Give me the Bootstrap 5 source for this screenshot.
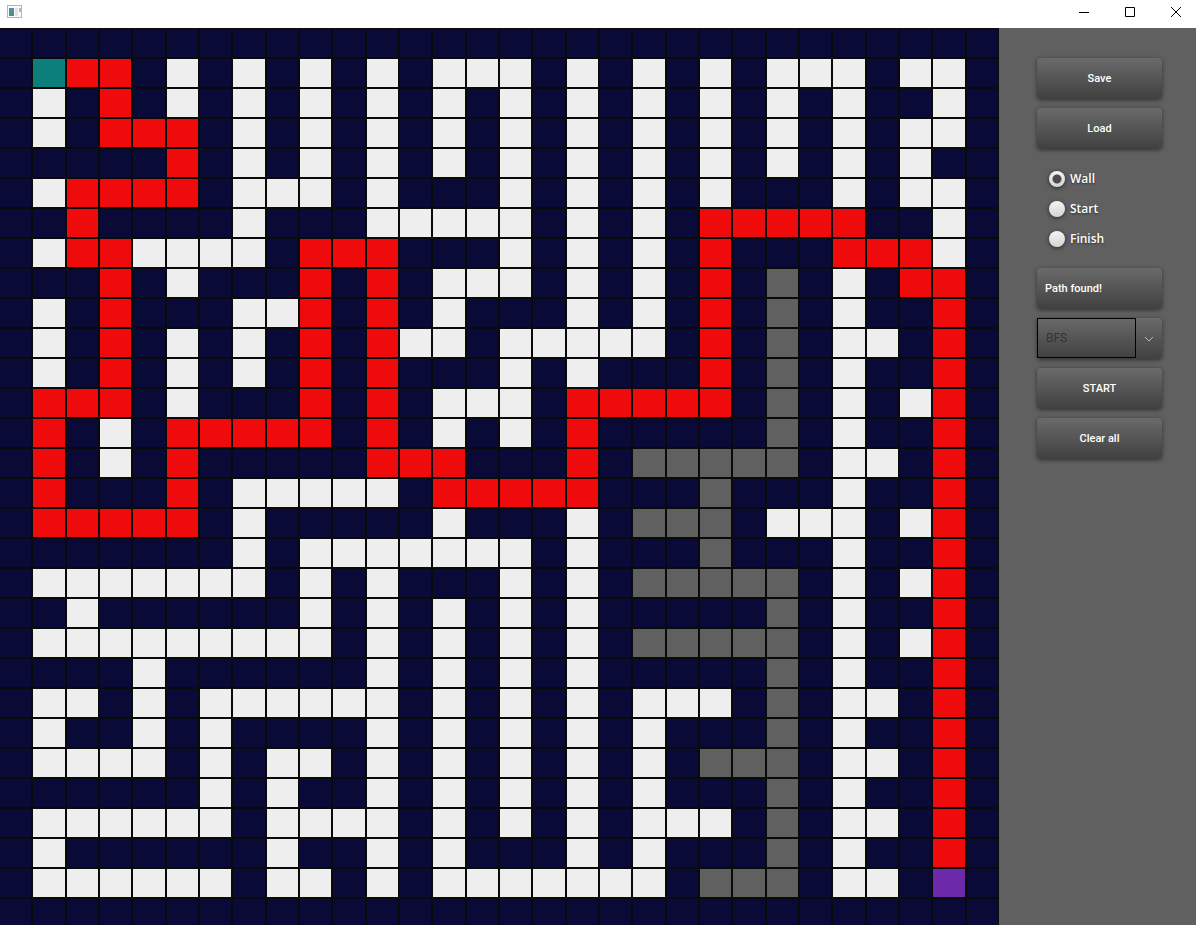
<!DOCTYPE html>
<html lang="en">
<head>
<meta charset="utf-8">
<meta name="viewport" content="width=device-width, initial-scale=1">
<title>Path finder</title>
<link href="https://cdn.jsdelivr.net/npm/bootstrap@5.3.0/dist/css/bootstrap.min.css" rel="stylesheet">
<style>
  body { font-family: Roboto, "Liberation Sans", sans-serif; background: #606060; }
  .titlebar { height: 28px; padding-left: 7px; background: #fff; }
  .win-btns { gap: 6px; }
  .win-btn { width: 40px; height: 24px; border: 0; background: none; }

  .maze { display: grid; grid-template-columns: repeat(30, 1fr); grid-auto-rows: 30px; align-content: start; margin-left: -1px; }
  .cell { border: 1px solid #0a0a0a; background: #0a0a38; }
  .cell-open { background: #eee; }
  .cell-path { background: #ef0b0b; }
  .cell-wall { background: #606060; }
  .cell-start { background: #0c7e7c; }
  .cell-finish { background: #6c29aa; }

  .side { width: 197px; padding: 30px 34px 0 38px; background: #606060; gap: 9px; }
  .slab {
    height: 41px; border: 0; border-radius: 4px; color: #fff;
    font-size: 11px; font-weight: 500; line-height: 16px;
    background: linear-gradient(#6a6a6a, #404040);
    box-shadow: 0 1px 4px rgba(0, 0, 0, .5);
  }
  .modes { padding: 6px 12px 5px; font-family: "Open Sans", "Noto Sans", sans-serif; font-size: 12px; font-weight: 600; color: #fff; text-shadow: 0 1px 2px rgba(0, 0, 0, .5); }
  .modes label { height: 30px; gap: 5px; }
  .modes input {
    appearance: none; width: 16px; height: 16px; margin: 0; border-radius: 50%;
    background: linear-gradient(#f4f4f4, #d4d4d4);
    box-shadow: 0 1px 4px rgba(0, 0, 0, .6);
  }
  .modes input:checked { background: radial-gradient(circle, #4c4c4c 4px, transparent 5px), linear-gradient(#f4f4f4, #d4d4d4); }
  .algo { width: 99px; height: 40px; padding: 0 8px; appearance: none; border: 1px solid #000; border-radius: 0; background: none; color: #333; font-size: 12px; font-weight: 400; }
</style>
</head>
<body class="vh-100 overflow-hidden d-flex flex-column">
<header class="titlebar d-flex align-items-start justify-content-between flex-shrink-0">
  <svg class="mt-1" width="16" height="16" viewBox="0 0 16 16" aria-hidden="true">
    <defs><linearGradient id="pic" x2="0" y2="1"><stop stop-color="#5b86b5"/><stop offset="1" stop-color="#3d9a6b"/></linearGradient></defs>
    <rect x=".5" y="1.500" width="14" height="12" fill="#fafafa" stroke="#b4b7ba"/>
    <rect x="2" y="4" width="5" height="8" fill="url(#pic)"/>
    <rect x="8" y="4" width="3" height="8" fill="#e2e2e2"/>
    <rect x="12" y="4" width="2" height="4" fill="#9fc4bd"/>
  </svg>
  <div class="win-btns d-flex">
    <button class="win-btn d-flex align-items-center justify-content-center p-0" aria-label="Minimize"><svg width="10" height="10"><path d="M0 5.500H10" stroke="#000"/></svg></button>
    <button class="win-btn d-flex align-items-center justify-content-center p-0" aria-label="Maximize"><svg width="10" height="10"><path d="M.5.5H9.500V9.500H.5Z" fill="none" stroke="#000"/></svg></button>
    <button class="win-btn d-flex align-items-center justify-content-center p-0" aria-label="Close"><svg width="10" height="10"><path d="M0 0L10 10M10 0L0 10" stroke="#000"/></svg></button>
  </div>
</header>

<div class="d-flex flex-grow-1 overflow-hidden">
  <main class="maze flex-grow-1" id="maze" role="img" aria-label="Maze with the found path"></main>

  <aside class="side d-flex flex-column flex-shrink-0">
    <button class="slab flex-shrink-0">Save</button>
    <button class="slab flex-shrink-0">Load</button>
    <div class="modes" role="radiogroup" aria-label="Brush">
      <label class="d-flex align-items-center" for="m-wall"><input type="radio" name="mode" id="m-wall" checked>Wall</label>
      <label class="d-flex align-items-center" for="m-start"><input type="radio" name="mode" id="m-start">Start</label>
      <label class="d-flex align-items-center" for="m-finish"><input type="radio" name="mode" id="m-finish">Finish</label>
    </div>
    <output class="slab d-flex align-items-center px-2 flex-shrink-0">Path found!</output>
    <div class="slab d-flex flex-shrink-0">
      <select class="algo" id="algo" aria-label="Algorithm"><option>BFS</option></select>
      <span class="flex-grow-1 d-flex align-items-center justify-content-center">
        <svg width="8" height="6" aria-hidden="true"><path d="M0 1L4 5L8 1" fill="none" stroke="#bbb"/></svg>
      </span>
    </div>
    <button class="slab flex-shrink-0">START</button>
    <button class="slab flex-shrink-0">Clear all</button>
  </aside>
</div>

<script>
  // # untouched, . open, r path, g wall, S start, F finish
  const rows = [
    "##############################",
    "#Srr#.#.#.#.#...#.#.#.#...#..#",
    "#.#r#.#.#.#.#.#.#.#.#.#.#.##.#",
    "#.#rrr#.#.#.#.#.#.#.#.#.#.#..#",
    "#####r#.#.#.#.#.#.#.#.#.#.#.##",
    "#.rrrr#...#.###.#.#.#.###.#..#",
    "##r####.###.....#.#.#rrrrr##.#",
    "#.rr....#rrr###.#.#.#r###rrr.#",
    "###r#.###r#r#...#.#.#r#g#.#rr#",
    "#.#r###..r#r#.###.#.#r#g#.##r#",
    "#.#r#.#.#r#r..#.....#r#g#..#r#",
    "#.#r#.#.#r#r###.#.###r#g#.##r#",
    "#rrr#.###r#r#...#rrrrr#g#.#.r#",
    "#r#.#rrrrr#r#.#.#r#####g#.##r#",
    "#r#.#r#####rrr###r#ggggg#..#r#",
    "#r###r#.....#rrrrr###g###.##r#",
    "#rrrrr#.#####.###.#ggg#...#.r#",
    "#######.#.......#.###g###.##r#",
    "#.......#.#.###.#.#ggggg#.#.r#",
    "##.######.#.#.#.#.#####g#.##r#",
    "#.........#.#.#.#.#ggggg#.#.r#",
    "####.######.#.#.#.#####g#.##r#",
    "#..#.#......#.#.#.#...#g#..#r#",
    "#.##.#.####.#.#.#.#.###g#.##r#",
    "#....#.#..#.#.#.#.#.#ggg#..#r#",
    "######.#.##.#.#.#.#.###g#.##r#",
    "#......#....#.#.#.#...#g#..#r#",
    "#.######.##.#.###.#.###g#.##r#",
    "#......#..#.#.......#ggg#..#F#",
    "##############################"
  ];
  const kinds = { ".": "cell-open", r: "cell-path", g: "cell-wall", S: "cell-start", F: "cell-finish" };
  document.getElementById("maze").innerHTML = rows.join("").split("")
    .map(c => `<div class="cell ${kinds[c] || ""}"></div>`).join("");
</script>
<script src="https://cdn.jsdelivr.net/npm/bootstrap@5.3.0/dist/js/bootstrap.bundle.min.js"></script>
</body>
</html>
